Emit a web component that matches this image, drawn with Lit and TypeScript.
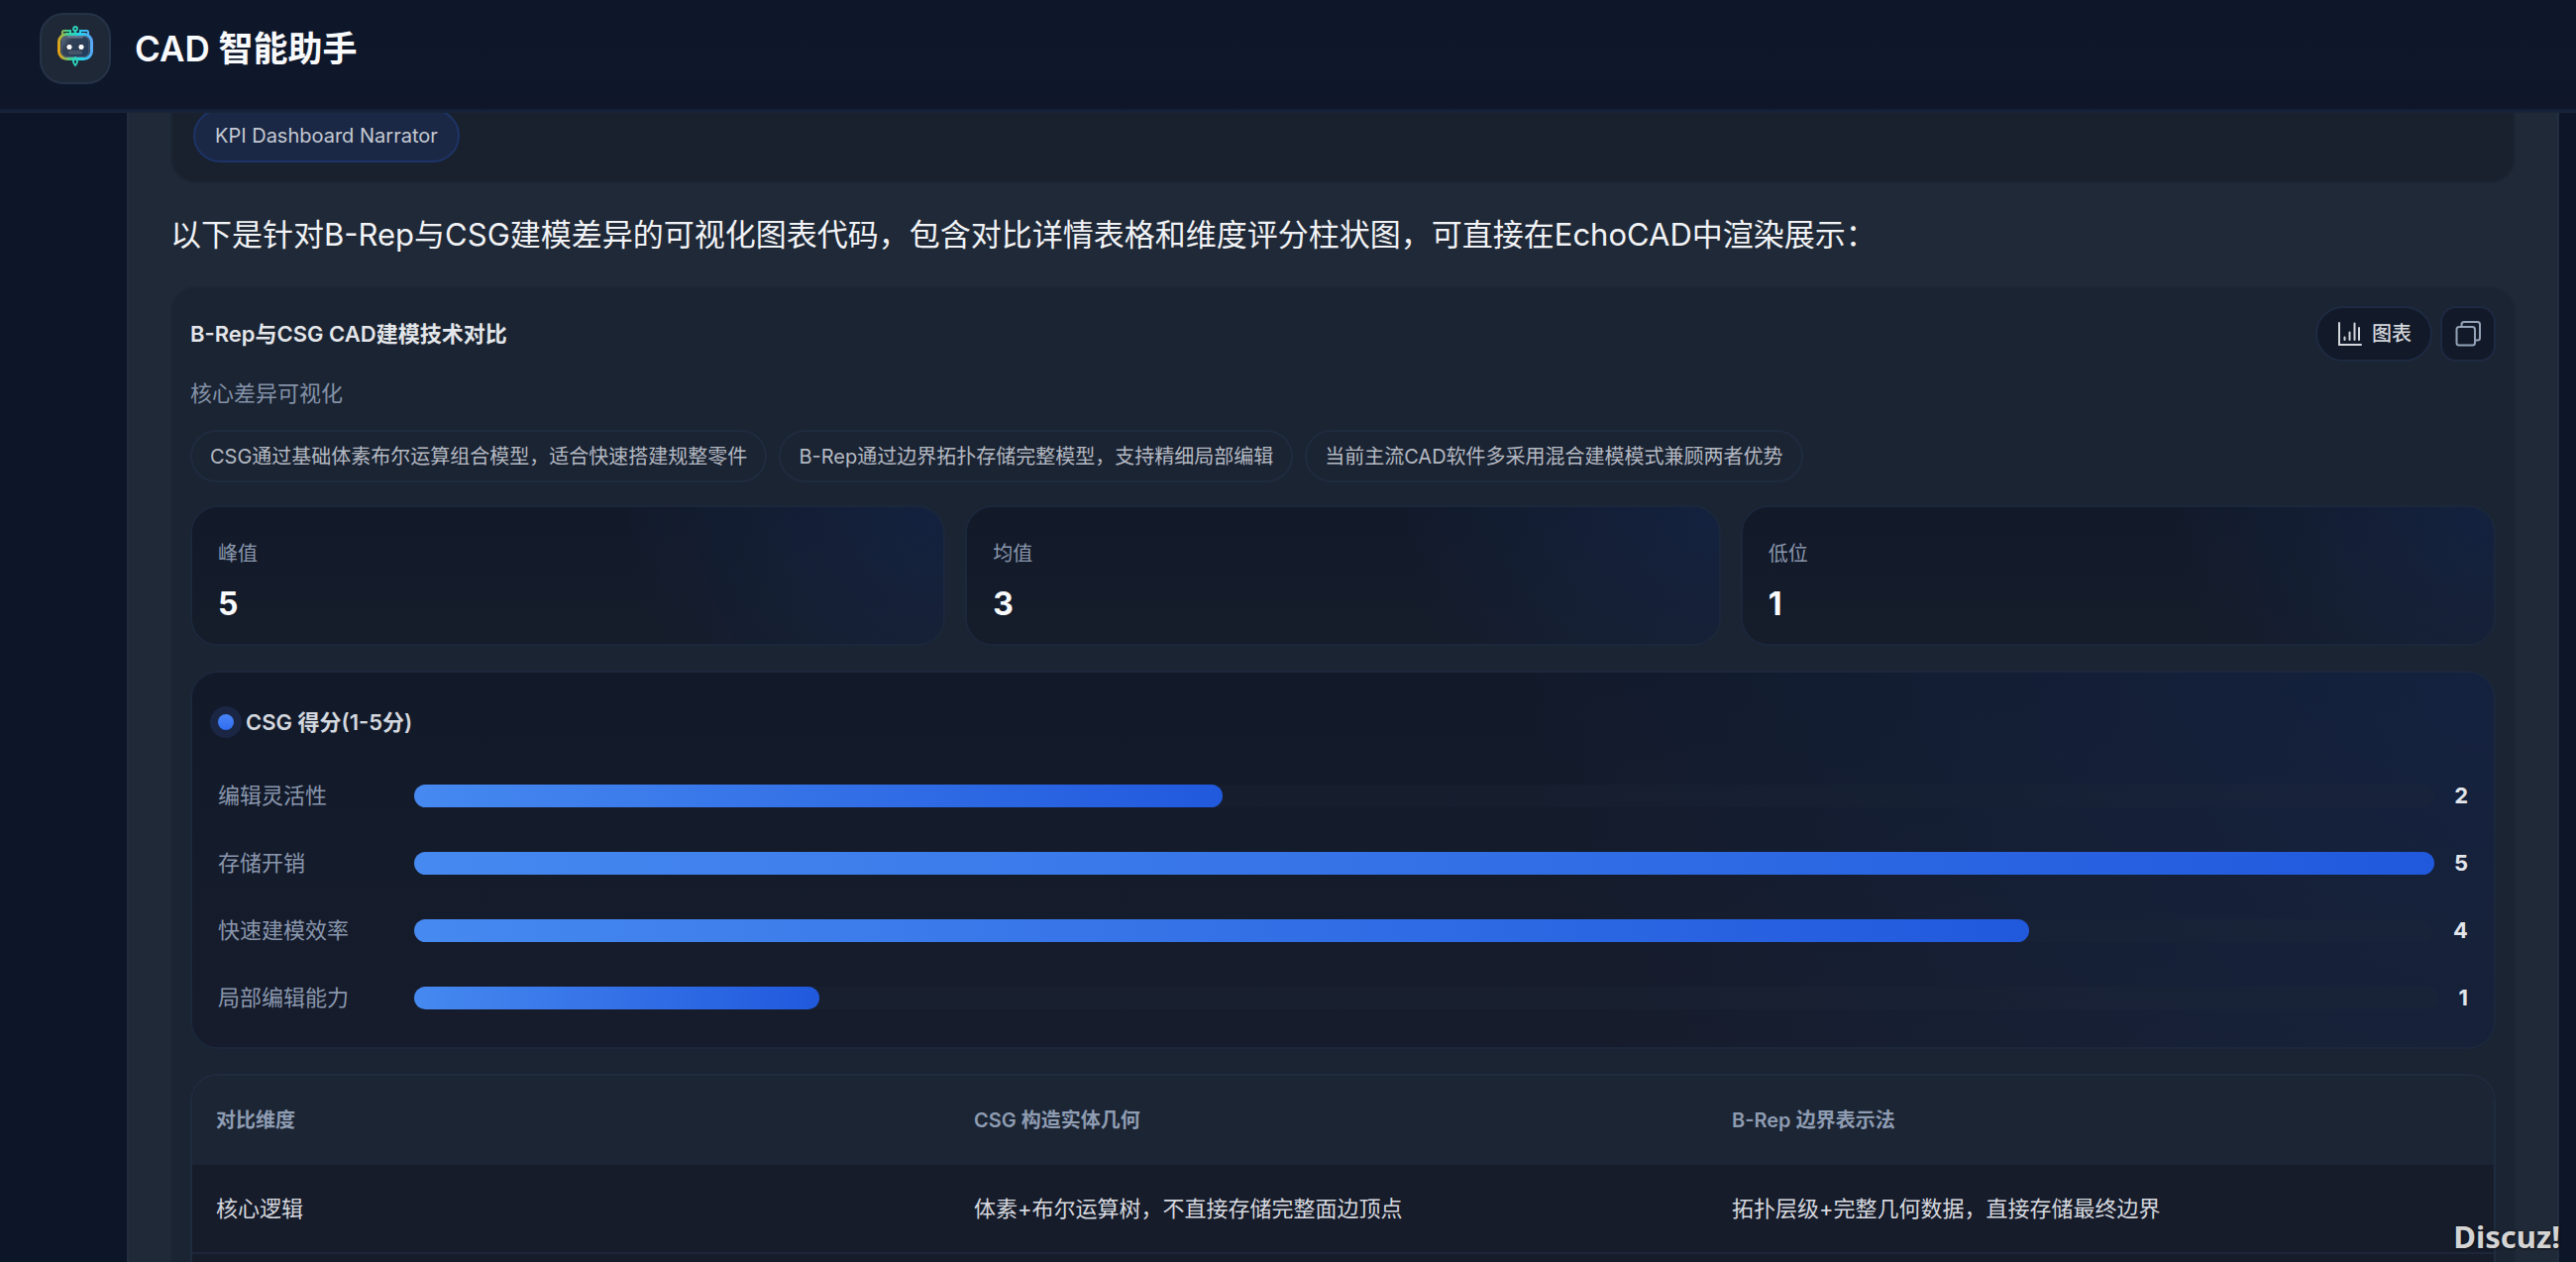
import { LitElement, html, css } from "lit";
import { customElement, property } from "lit/decorators.js";

interface Score {
  label: string;
  value: number;
}

const HIGHLIGHTS = [
  "CSG通过基础体素布尔运算组合模型，适合快速搭建规整零件",
  "B-Rep通过边界拓扑存储完整模型，支持精细局部编辑",
  "当前主流CAD软件多采用混合建模模式兼顾两者优势",
];

const STATS: Score[] = [
  { label: "峰值", value: 5 },
  { label: "均值", value: 3 },
  { label: "低位", value: 1 },
];

const SCORES: Score[] = [
  { label: "编辑灵活性", value: 2 },
  { label: "存储开销", value: 5 },
  { label: "快速建模效率", value: 4 },
  { label: "局部编辑能力", value: 1 },
];

const COLUMNS = ["对比维度", "CSG 构造实体几何", "B-Rep 边界表示法"];

const ROWS = [
  ["核心逻辑", "体素+布尔运算树，不直接存储完整面边顶点", "拓扑层级+完整几何数据，直接存储最终边界"],
];

@customElement("app-header")
class AppHeader extends LitElement {
  static styles = css`
    :host {
      display: block;
      flex: none;
      position: relative;
      z-index: 1;
    }
    .bar {
      display: flex;
      align-items: center;
      gap: 24px;
      box-sizing: border-box;
      height: 114px;
      padding: 0 40px 14px;
      background: linear-gradient(#0e1629, #0f172b 60%, #0e1628);
      border-bottom: 2px solid #182437;
      box-shadow: inset 0 -2px #131f38;
    }
    .logo {
      display: grid;
      place-items: center;
      box-sizing: border-box;
      width: 72px;
      height: 72px;
      border: 2px solid #263248;
      border-radius: 24px;
      background: #1e2836;
    }
    .title {
      margin: 0;
      font-size: 35px;
      line-height: 48px;
      font-weight: 600;
      color: #f8fafc;
    }
  `;

  render() {
    return html`
      <header class="bar">
        <div class="logo">
          <svg width="48" height="48" viewBox="0 0 48 48" fill="none" aria-hidden="true">
            <defs>
              <linearGradient id="frame" x1="6" y1="24" x2="42" y2="20" gradientUnits="userSpaceOnUse">
                <stop offset="0" stop-color="#f59e0b" />
                <stop offset="0.35" stop-color="#34d399" />
                <stop offset="0.65" stop-color="#22d3ee" />
                <stop offset="1" stop-color="#60a5fa" />
              </linearGradient>
              <linearGradient id="face" x1="10" y1="11" x2="38" y2="33" gradientUnits="userSpaceOnUse">
                <stop offset="0" stop-color="#64748b" />
                <stop offset="0.3" stop-color="#334155" />
                <stop offset="1" stop-color="#1e3a5f" />
              </linearGradient>
            </defs>
            <path d="M11 10V7.500q0-1.500 1.500-1.500H19v3M29 9V6h6.500q1.500 0 1.500 1.500V10" stroke="url(#frame)" stroke-width="2" />
            <rect x="13" y="8" width="8" height="4" rx="2" fill="#4fd18b" />
            <rect x="27" y="8" width="8" height="4" rx="2" fill="#22d3ee" />
            <rect x="7.500" y="9.500" width="33" height="25" rx="8" stroke="url(#frame)" stroke-width="3" />
            <rect x="10" y="11.500" width="28" height="21" rx="6" fill="url(#face)" stroke="#56657d" />
            <rect x="16" y="11" width="16" height="2.500" rx="1" fill="#64748b" />
            <circle cx="24" cy="4" r="2" stroke="#2dd4bf" stroke-width="1.800" />
            <path d="M24 6v4" stroke="#2dd4bf" stroke-width="2" />
            <path d="M24 33q-4 4 0 8 4-4 0-8z" stroke="#2dd4bf" stroke-width="1.800" />
            <circle cx="18" cy="22.500" r="3.200" fill="#f8fafc" stroke="#1e293b" />
            <circle cx="30" cy="22.500" r="3.200" fill="#f8fafc" stroke="#1e293b" />
            <rect x="17" y="26" width="14" height="4" rx="1.500" fill="#475569" />
          </svg>
        </div>
        <h1 class="title">CAD 智能助手</h1>
      </header>
    `;
  }
}

@customElement("stat-card")
class StatCard extends LitElement {
  @property() label = "";
  @property({ type: Number }) value = 0;

  static styles = css`
    :host {
      display: block;
      box-sizing: border-box;
      padding: 33px 26px 20px;
      border: 2px solid #1b273b;
      border-radius: 28px;
      background:
        radial-gradient(circle at top right, rgba(37, 99, 235, 0.11), transparent 42%),
        linear-gradient(#121a2a, #151c2a);
    }
    .label {
      font-size: 20px;
      line-height: 28px;
      color: #8a97ad;
    }
    .value {
      margin-top: 17px;
      font-size: 32px;
      line-height: 40px;
      font-weight: 700;
      color: #f8fafc;
    }
  `;

  render() {
    return html`
      <div class="label">${this.label}</div>
      <div class="value">${this.value}</div>
    `;
  }
}

@customElement("score-chart")
class ScoreChart extends LitElement {
  @property() heading = "";
  @property({ attribute: false }) scores: Score[] = [];

  static styles = css`
    :host {
      display: block;
      padding: 34px 26px 32px;
      border: 2px solid #1b273b;
      border-radius: 28px;
      background:
        radial-gradient(circle at top right, rgba(37, 99, 235, 0.11), transparent 42%),
        linear-gradient(#121a2a, #161c2b);
    }
    .heading {
      display: flex;
      align-items: center;
      gap: 12px;
      margin: 0;
      font-size: 22px;
      line-height: 32px;
      font-weight: 600;
      color: #d4d8df;
    }
    .dot {
      width: 16px;
      height: 16px;
      border-radius: 50%;
      background: linear-gradient(#4a86f7, #2f6df0);
      box-shadow: 0 0 0 8px #1a2644;
    }
    .rows {
      display: grid;
      gap: 32px;
      margin: 40px 0 0;
      padding: 0;
      list-style: none;
    }
    .row {
      display: grid;
      grid-template-columns: 178px 1fr auto;
      gap: 20px;
      align-items: center;
      font-size: 22px;
      line-height: 36px;
    }
    .label {
      color: #8a97ad;
    }
    .track {
      height: 23px;
      border-radius: 12px;
      background: rgba(30, 41, 55, 0.3);
    }
    .fill {
      height: 100%;
      border-radius: 12px;
      background: linear-gradient(90deg, #4689f0, #2159dd);
    }
    .value {
      font-weight: 700;
      color: #e2e5ea;
    }
  `;

  render() {
    const max = Math.max(...this.scores.map((s) => s.value));
    return html`
      <h3 class="heading"><span class="dot"></span>${this.heading}</h3>
      <ul class="rows">
        ${this.scores.map(
          (s) => html`
            <li class="row">
              <span class="label">${s.label}</span>
              <div class="track"><div class="fill" style="width:${(s.value / max) * 100}%"></div></div>
              <span class="value">${s.value}</span>
            </li>
          `
        )}
      </ul>
    `;
  }
}

@customElement("compare-table")
class CompareTable extends LitElement {
  static styles = css`
    :host {
      display: block;
      overflow: hidden;
      border: 2px solid #1f2b3e;
      border-radius: 28px;
      background: #171c2b;
    }
    .table {
      display: block;
      padding-bottom: 40px;
      border-spacing: 0;
    }
    .group {
      display: block;
    }
    .line {
      display: grid;
      grid-template-columns: repeat(3, 1fr);
      gap: 20px;
      padding: 0 24px;
      border-bottom: 2px solid #1c2639;
    }
    .line.head {
      border-bottom: 0;
      background: #1c2534;
    }
    .th,
    .td {
      padding: 28px 0;
      text-align: left;
    }
    .th {
      padding: 29px 0;
      font-size: 20px;
      line-height: 32px;
      font-weight: 600;
      color: #8e9cb2;
    }
    .td {
      font-size: 22px;
      line-height: 32px;
      color: #d6d9df;
    }
  `;

  render() {
    return html`
      <table class="table">
        <thead class="group">
          <tr class="line head">
            ${COLUMNS.map((c) => html`<th class="th" scope="col">${c}</th>`)}
          </tr>
        </thead>
        <tbody class="group">
          ${ROWS.map((r) => html`<tr class="line">${r.map((c) => html`<td class="td">${c}</td>`)}</tr>`)}
        </tbody>
      </table>
    `;
  }
}

@customElement("app-root")
class AppRoot extends LitElement {
  static styles = css`
    :host {
      display: flex;
      flex-direction: column;
      position: relative;
      height: 100vh;
      overflow: hidden;
      background: #0d1528;
      font-family: Inter, "Noto Sans CJK SC", sans-serif;
    }
    .message {
      flex: 1;
      min-height: 0;
      overflow: hidden;
      margin: 0 17px 0 128px;
      padding: 0 42px;
      border: 0 solid #222e40;
      border-width: 0 2px;
      background: #202937;
    }
    .skills {
      display: flex;
      margin-top: -24px;
      padding: 20px 21px 19px;
      border: 2px solid #1b2534;
      border-top: 0;
      border-radius: 0 0 26px 26px;
      background: #19212e;
    }
    .skill {
      box-sizing: border-box;
      height: 54px;
      padding: 0 20px;
      border: 2px solid #1d3468;
      border-radius: 27px;
      background: #1b2845;
      font-size: 20px;
      line-height: 50px;
      color: #c3c8d2;
    }
    .intro {
      margin: 24px 0;
      font-size: 31px;
      line-height: 56px;
      color: #f1f3f6;
    }
    .card {
      padding: 18px 18px 40px;
      border: 2px solid #1b2636;
      border-radius: 26px;
      background: #1b2432;
    }
    .top {
      display: flex;
      align-items: center;
      gap: 8px;
    }
    .name {
      flex: 1;
      margin: 0;
      font-size: 22px;
      line-height: 32px;
      font-weight: 600;
      color: #e3e6ea;
    }
    .button {
      display: inline-flex;
      align-items: center;
      justify-content: center;
      gap: 8px;
      box-sizing: border-box;
      height: 56px;
      margin: 0;
      padding: 0 19px;
      border: 2px solid #1d2a42;
      border-radius: 28px;
      background: #121a2a;
      font: 500 20px/28px Inter, "Noto Sans CJK SC", sans-serif;
      color: #d3d6db;
      cursor: pointer;
    }
    .button.square {
      width: 56px;
      padding: 0;
      border-radius: 16px;
      color: #94a3b8;
    }
    .subtitle {
      margin: 18px 0 23px;
      font-size: 22px;
      line-height: 28px;
      color: #8492a8;
    }
    .highlights {
      display: flex;
      flex-wrap: wrap;
      gap: 12px;
      margin: 0;
      padding: 0;
      list-style: none;
    }
    .highlight {
      box-sizing: border-box;
      height: 53px;
      padding: 0 18px;
      border: 2px solid #1f2b3f;
      border-radius: 27px;
      background: #1b2433;
      font-size: 20px;
      line-height: 50px;
      color: #b4b9c2;
    }
    .stats {
      display: grid;
      grid-template-columns: repeat(3, 1fr);
      gap: 20px;
      margin: 23px 0 25px;
    }
    .chart {
      margin-bottom: 25px;
    }
    .watermark {
      position: absolute;
      right: 16px;
      bottom: 6px;
      font: 700 31px/40px "Noto Sans", sans-serif;
      color: #d4d4d4;
      text-shadow: 0 0 2px #10151f, 1px 1px 2px #10151f;
    }
  `;

  render() {
    return html`
      <app-header></app-header>
      <main class="message">
        <div class="skills"><span class="skill">KPI Dashboard Narrator</span></div>
        <p class="intro">
          以下是针对B-Rep与CSG建模差异的可视化图表代码，包含对比详情表格和维度评分柱状图，可直接在EchoCAD中渲染展示：
        </p>
        <section class="card">
          <div class="top">
            <h2 class="name">B-Rep与CSG CAD建模技术对比</h2>
            <button class="button" type="button">
              <svg width="28" height="28" viewBox="0 0 28 28" fill="none" stroke="currentColor" stroke-width="2" stroke-linecap="round" aria-hidden="true">
                <path d="M3 3v22h22M8.500 17.500v2.500M13.500 12.500V20M18.500 3.500V20M23 8v12" />
              </svg>
              图表
            </button>
            <button class="button square" type="button" aria-label="复制">
              <svg width="28" height="28" viewBox="0 0 28 28" fill="none" stroke="currentColor" stroke-width="2" stroke-linejoin="round" aria-hidden="true">
                <rect x="2.500" y="7" width="18.500" height="18.500" rx="2.500" />
                <path d="M7.500 7V4.500Q7.500 2 10 2H23.500Q26 2 26 4.500V18Q26 20.500 23.500 20.500H21" />
              </svg>
            </button>
          </div>
          <p class="subtitle">核心差异可视化</p>
          <ul class="highlights">
            ${HIGHLIGHTS.map((h) => html`<li class="highlight">${h}</li>`)}
          </ul>
          <div class="stats">
            ${STATS.map((s) => html`<stat-card .label=${s.label} .value=${s.value}></stat-card>`)}
          </div>
          <score-chart class="chart" heading="CSG 得分(1-5分)" .scores=${SCORES}></score-chart>
          <compare-table></compare-table>
        </section>
      </main>
      <div class="watermark">Discuz!</div>
    `;
  }
}
